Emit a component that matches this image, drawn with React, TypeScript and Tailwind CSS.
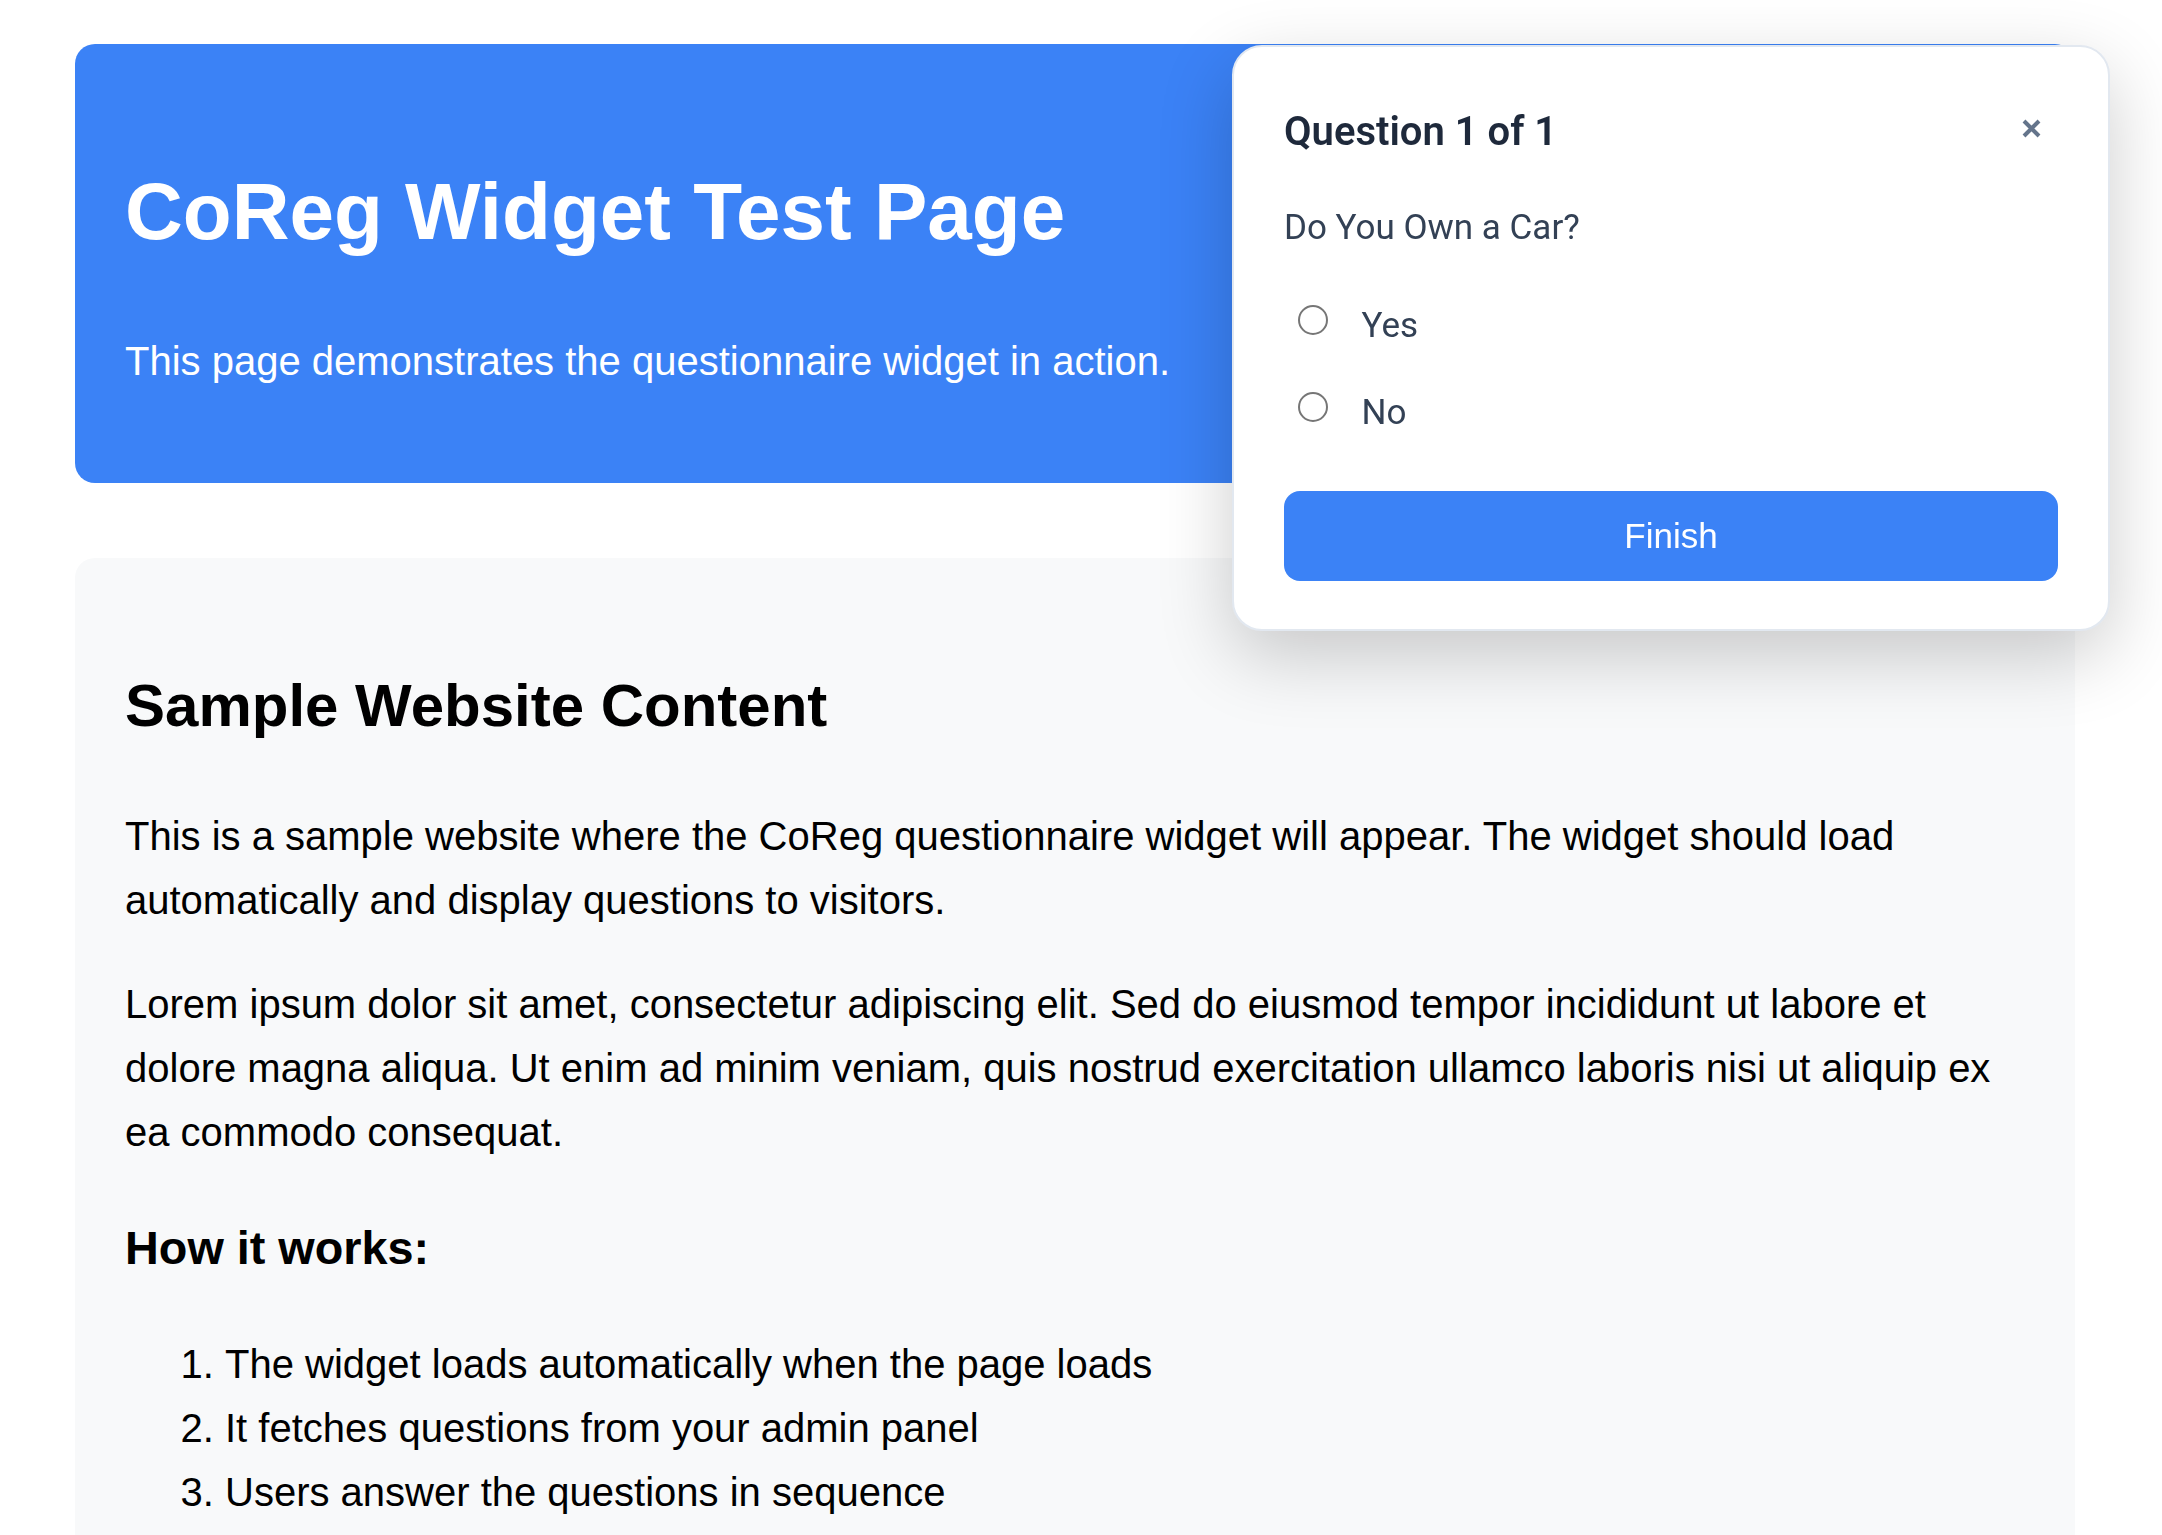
import React from "react";

const steps = [
  "The widget loads automatically when the page loads",
  "It fetches questions from your admin panel",
  "Users answer the questions in sequence",
];

function Widget() {
  return (
    <div className="fixed top-[45px] right-[52px] w-[878px] rounded-[30px] border-2 border-[#e2e8f0] bg-white px-[50px] pt-[50px] pb-[48px] font-['Roboto',sans-serif] shadow-[0_25px_75px_rgba(0,0,0,0.2)]">
      <div className="flex h-[64px] items-center justify-between">
        <h3 className="mt-[6px] text-[40px] font-semibold leading-[64px] text-[#1e293b]">Question 1 of 1</h3>
        <button className="mb-[2px] flex h-[54px] w-[54px] items-center justify-center text-[#64748b]">
          <svg width="19" height="19" viewBox="0 0 19 19" fill="none" stroke="currentColor" strokeWidth="4">
            <path d="M2 2L17 17M17 2L2 17" />
          </svg>
        </button>
      </div>
      <p className="mt-[39px] text-[35px] leading-[56px] text-[#334155]">Do You Own a Car?</p>
      <div className="mt-[42px] flex flex-col gap-[31px]">
        {["Yes", "No"].map((o) => (
          <label key={o} className="flex h-[56px] items-start text-[35px] leading-[56px] text-[#334155]">
            <span className="ml-[13.5px] mt-[7px] h-[30px] w-[30px] shrink-0 rounded-full border-2 border-[#767676] bg-white" />
            <span className="ml-[34px]">{o}</span>
          </label>
        ))}
      </div>
      <button className="mt-[50px] flex h-[90px] w-full items-center justify-center rounded-[16px] bg-[#3b82f6] font-['Liberation_Sans',Arial,sans-serif] text-[35px] text-white">
        Finish
      </button>
    </div>
  );
}

export default function App() {
  return (
    <div className="relative min-h-screen bg-white font-['Liberation_Sans',Arial,sans-serif] text-black">
      <div className="ml-[75px] w-[2000px] pt-[44px]">
        {/* hero */}
        <header className="rounded-[20px] bg-[#3b82f6] p-[50px] text-white">
          <h1 className="my-[53.6px] text-[80px] font-bold leading-[128px]">CoReg Widget Test Page</h1>
          <p className="mb-[40px] text-[40px] leading-[64px]">
            This page demonstrates the questionnaire widget in action.
          </p>
        </header>

        {/* content */}
        <main className="mt-[75px] rounded-[20px] bg-[#f8f9fa] p-[50px]">
          <h2 className="my-[49.8px] text-[60px] font-bold leading-[96px]">Sample Website Content</h2>
          <p className="mb-[40px] text-[40px] leading-[64px]">
            This is a sample website where the CoReg questionnaire widget will appear. The widget should load
            automatically and display questions to visitors.
          </p>
          <p className="mb-[40px] text-[40px] leading-[64px]">
            Lorem ipsum dolor sit amet, consectetur adipiscing elit. Sed do eiusmod tempor incididunt ut labore et
            dolore magna aliqua. Ut enim ad minim veniam, quis nostrud exercitation ullamco laboris nisi ut aliquip ex
            ea commodo consequat.
          </p>
          <h3 className="my-[46.8px] text-[46.8px] font-bold leading-[74.9px]">How it works:</h3>
          <ol className="list-decimal pl-[100px] text-[40px] leading-[64px]">
            {steps.map((s) => (
              <li key={s}>{s}</li>
            ))}
          </ol>
        </main>
      </div>
      <Widget />
    </div>
  );
}
